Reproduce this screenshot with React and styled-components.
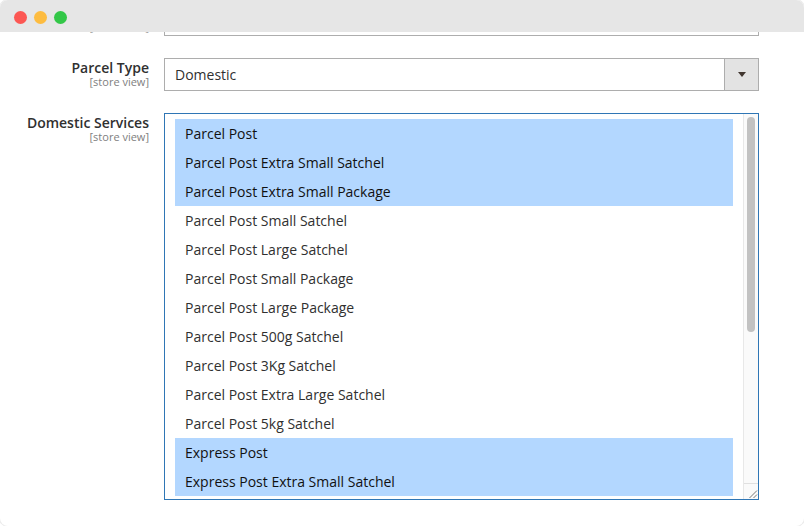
import React from "react";
import styled, { createGlobalStyle } from "styled-components";

const servicesList = [
  { name: "Parcel Post", selected: true },
  { name: "Parcel Post Extra Small Satchel", selected: true },
  { name: "Parcel Post Extra Small Package", selected: true },
  { name: "Parcel Post Small Satchel" },
  { name: "Parcel Post Large Satchel" },
  { name: "Parcel Post Small Package" },
  { name: "Parcel Post Large Package" },
  { name: "Parcel Post 500g Satchel" },
  { name: "Parcel Post 3Kg Satchel" },
  { name: "Parcel Post Extra Large Satchel" },
  { name: "Parcel Post 5kg Satchel" },
  { name: "Express Post", selected: true },
  { name: "Express Post Extra Small Satchel", selected: true },
];

const GlobalStyle = createGlobalStyle`
  * {
    box-sizing: border-box;
  }
  html, body {
    margin: 0;
    padding: 0;
    background: #fff;
  }
  body {
    font-family: "Open Sans", "Liberation Sans", sans-serif;
  }
`;

const Page = styled.div`
  width: 804px;
  height: 526px;
  background: #fff;
  overflow: hidden;
`;

const Window = styled.div`
  height: 526px;
  display: flex;
  flex-direction: column;
  background: #fff;
  border-radius: 8px;
  box-shadow: 0 0 0 1px #ececec;
  overflow: hidden;
`;

const TitleBar = styled.div`
  height: 32px;
  flex-shrink: 0;
  display: flex;
  align-items: center;
  gap: 7px;
  padding: 2px 0 0 14px;
  background: #e6e6e6;
`;

const Dot = styled.span`
  width: 13px;
  height: 13px;
  border-radius: 50%;
  background: ${(p) => p.$color};
`;

const Content = styled.div`
  flex: 1;
  overflow: hidden;
  display: flex;
  flex-direction: column;
  gap: 22px;
  padding-right: 45px;
`;

const Row = styled.div`
  display: flex;
  align-items: flex-start;
  gap: 15px;
`;

const CutRow = styled(Row)`
  height: 4px;
  overflow: hidden;
`;

const LabelCol = styled.div`
  width: 149px;
  flex-shrink: 0;
  text-align: right;
`;

const Label = styled.div`
  font-size: 14px;
  font-weight: 600;
  line-height: 19px;
  color: #303030;
`;

const Scope = styled.div`
  font-size: 11px;
  line-height: 11px;
  color: #808080;
  margin-top: ${(p) => p.$top ?? -1}px;
`;

const CutInput = styled.div`
  flex: 1;
  height: 4px;
  border: 1px solid #adadad;
  border-top: none;
  background: #fff;
`;

const Select = styled.div`
  flex: 1;
  height: 33px;
  display: flex;
  border: 1px solid #adadad;
  background: #fff;
`;

const SelectValue = styled.div`
  flex: 1;
  padding-left: 10px;
  font-size: 14px;
  line-height: 31px;
  color: #303030;
`;

const SelectButton = styled.div`
  width: 34px;
  display: flex;
  align-items: center;
  justify-content: center;
  background: #e3e3e3;
  border-left: 1px solid #adadad;
`;

const Arrow = styled.span`
  width: 0;
  height: 0;
  border-left: 4px solid transparent;
  border-right: 4px solid transparent;
  border-top: 5px solid #41362f;
`;

const ListBox = styled.div`
  flex: 1;
  height: 387px;
  display: flex;
  border: 1px solid #2f76b5;
  background: #fff;
`;

const Options = styled.div`
  flex: 1;
  padding: 5px 10px 0 10px;
  overflow: hidden;
`;

const Option = styled.div`
  height: 29px;
  padding-left: 10px;
  font-size: 14px;
  line-height: 29px;
  color: ${(p) => (p.$selected ? "#111" : "#303030")};
  background: ${(p) => (p.$selected ? "#b3d7ff" : "transparent")};
`;

const ScrollBar = styled.div`
  width: 15px;
  display: flex;
  flex-direction: column;
  background: #fafafa;
  border-left: 1px solid #e8e8e8;
`;

const Track = styled.div`
  flex: 1;
  padding: 3px 3px 0 3px;
`;

const Thumb = styled.div`
  height: 215px;
  border-radius: 4px;
  background: #c2c2c2;
`;

const Resizer = styled.div`
  height: 16px;
  display: flex;
  background: #fafafa;
  border-top: 1px solid #e0e0e0;
`;

const App = () => {
  return (
    <Page>
      <GlobalStyle />
      <Window>
        <TitleBar>
          <Dot $color="#fc5753" />
          <Dot $color="#fdbc40" />
          <Dot $color="#33c748" />
        </TitleBar>
        <Content>
          <CutRow>
            <LabelCol>
              <Scope $top={-11}>[store view]</Scope>
            </LabelCol>
            <CutInput />
          </CutRow>
          <Row>
            <LabelCol>
              <Label>Parcel Type</Label>
              <Scope>[store view]</Scope>
            </LabelCol>
            <Select>
              <SelectValue>Domestic</SelectValue>
              <SelectButton>
                <Arrow />
              </SelectButton>
            </Select>
          </Row>
          <Row>
            <LabelCol>
              <Label>Domestic Services</Label>
              <Scope>[store view]</Scope>
            </LabelCol>
            <ListBox>
              <Options>
                {servicesList.map((service) => (
                  <Option key={service.name} $selected={service.selected}>
                    {service.name}
                  </Option>
                ))}
              </Options>
              <ScrollBar>
                <Track>
                  <Thumb />
                </Track>
                <Resizer>
                  <svg width="14" height="15" viewBox="0 0 14 15">
                    <path d="M5.5 14 L13 6.5 M9.5 14 L13 10.5" stroke="#777" strokeWidth="1" fill="none" />
                  </svg>
                </Resizer>
              </ScrollBar>
            </ListBox>
          </Row>
        </Content>
      </Window>
    </Page>
  );
};

export default App;
